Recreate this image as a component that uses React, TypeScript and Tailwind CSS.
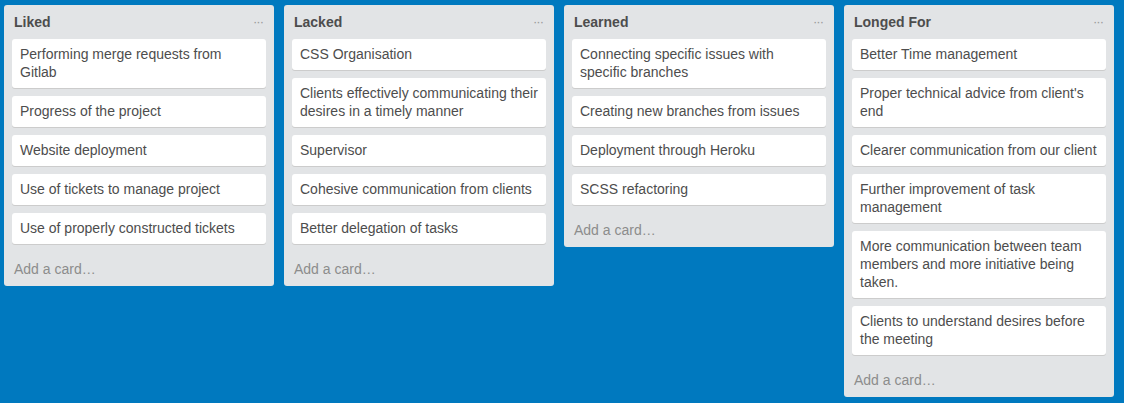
import React from "react";

const lists: { title: string; cards: string[] }[] = [
  {
    title: "Liked",
    cards: [
      "Performing merge requests from Gitlab",
      "Progress of the project",
      "Website deployment",
      "Use of tickets to manage project",
      "Use of properly constructed tickets",
    ],
  },
  {
    title: "Lacked",
    cards: [
      "CSS Organisation",
      "Clients effectively communicating their desires in a timely manner",
      "Supervisor",
      "Cohesive communication from clients",
      "Better delegation of tasks",
    ],
  },
  {
    title: "Learned",
    cards: [
      "Connecting specific issues with specific branches",
      "Creating new branches from issues",
      "Deployment through Heroku",
      "SCSS refactoring",
    ],
  },
  {
    title: "Longed For",
    cards: [
      "Better Time management",
      "Proper technical advice from client's end",
      "Clearer communication from our client",
      "Further improvement of task management",
      "More communication between team members and more initiative being taken.",
      "Clients to understand desires before the meeting",
    ],
  },
];

export default function App() {
  return (
    <div
      className="w-[1124px] h-[403px] bg-[#0079bf] overflow-hidden"
      style={{ fontFamily: '"Liberation Sans", Arial, sans-serif' }}
    >
      <div className="flex items-start gap-[10px] pl-[4px] pt-[5px]">
        {lists.map((list) => (
          <div key={list.title} className="w-[270px] bg-[#e2e4e6] rounded-[3px] flex flex-col">
            <div className="flex items-center justify-between pt-[8px] pb-[8px] pl-[10px] pr-[11px]">
              <h2 className="text-[14px] leading-[18px] font-bold text-[#4d4d4d]">{list.title}</h2>
              <span className="text-[#999] text-[13px] leading-[18px] tracking-[-1px]">···</span>
            </div>
            <div className="px-[8px] flex flex-col">
              {list.cards.map((c) => (
                <div
                  key={c}
                  className="bg-white rounded-[3px] shadow-[0_1px_0_#ccc] pt-[6px] pb-[7px] px-[8px] mb-[8px] text-[14px] leading-[18px] text-[#4d4d4d]"
                >
                  {c}
                </div>
              ))}
            </div>
            <div className="pt-[8px] pb-[8px] px-[10px] text-[14px] leading-[18px] text-[#8c8c8c]">
              Add a card…
            </div>
          </div>
        ))}
      </div>
    </div>
  );
}
